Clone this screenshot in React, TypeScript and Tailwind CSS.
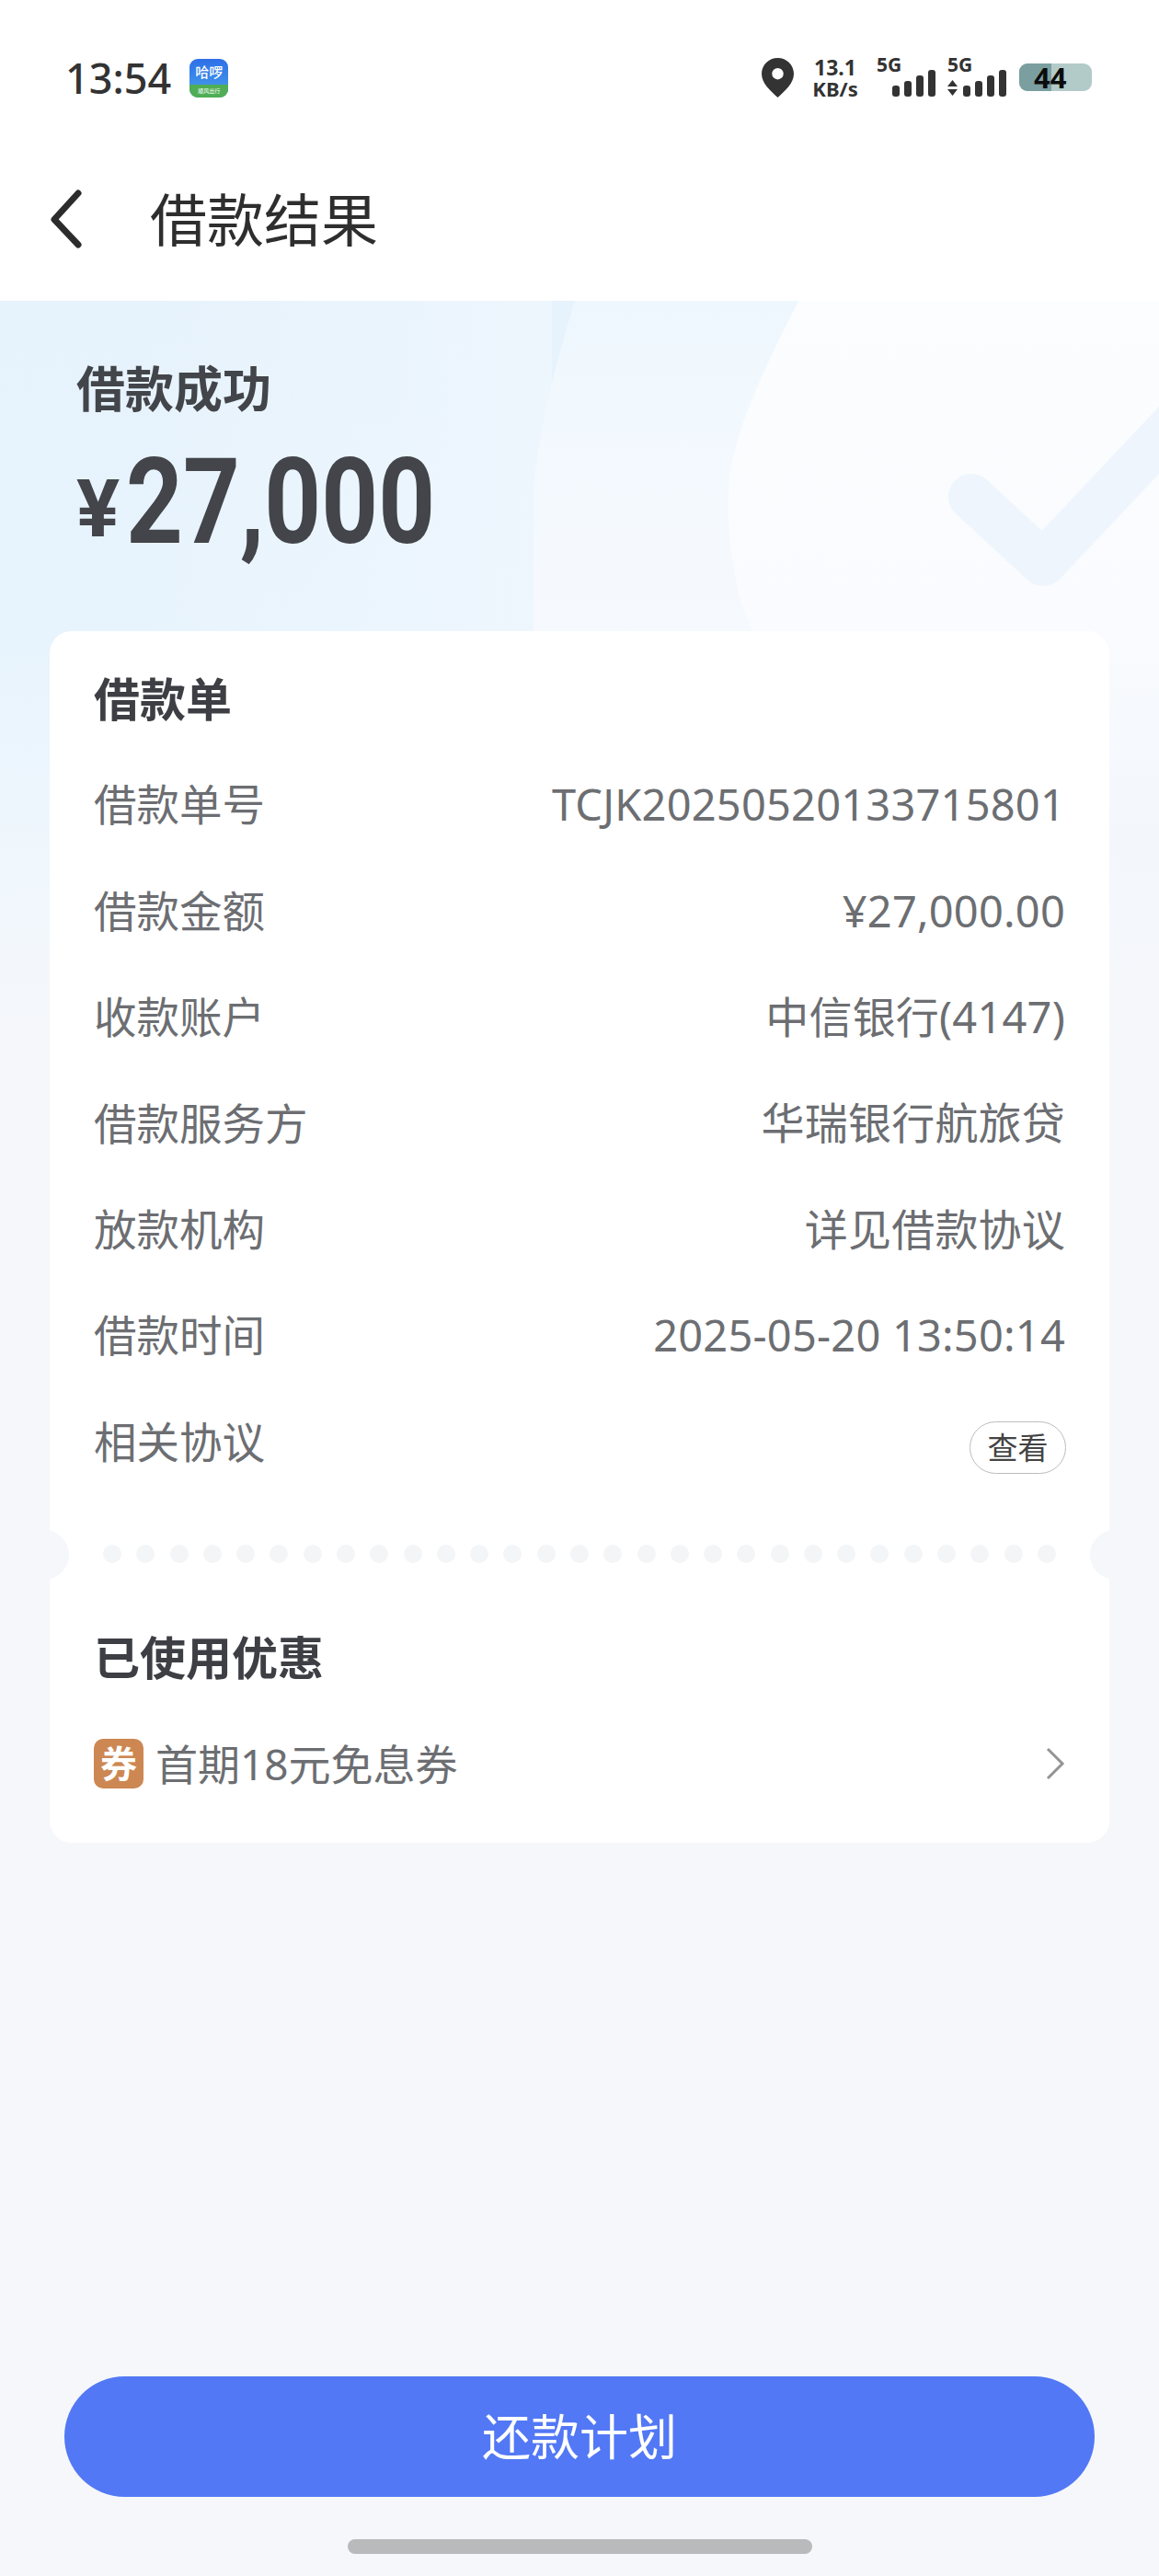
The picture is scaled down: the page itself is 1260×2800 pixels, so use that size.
const sans = "font-['Noto_Sans','Noto_Sans_CJK_SC',sans-serif]";

const rows = [
  { label: "借款单号", value: "TCJK20250520133715801" },
  { label: "借款金额", value: "¥27,000.00" },
  { label: "收款账户", value: "中信银行(4147)" },
  { label: "借款服务方", value: "华瑞银行航旅贷" },
  { label: "放款机构", value: "详见借款协议" },
  { label: "借款时间", value: "2025-05-20 13:50:14" },
];

function SignalBars() {
  return (
    <svg width="47" height="29" viewBox="0 0 47 29" fill="#333333">
      <rect x="0" y="17" width="8" height="12" rx="3" />
      <rect x="13" y="12" width="8" height="17" rx="3" />
      <rect x="26" y="6" width="8" height="23" rx="3" />
      <rect x="39" y="0" width="8" height="29" rx="3" />
    </svg>
  );
}

function StatusBar() {
  return (
    <div className="flex h-[150px] items-start justify-between pl-[71px] pr-[73px] pt-[62px]">
      <div className="flex items-center">
        <span className="text-[45px] leading-[46px] font-medium text-[#333333]">13:54</span>
        <div className="ml-[20px] h-[42px] w-[42px] overflow-hidden rounded-[9px] bg-gradient-to-b from-[#2e6fe8] to-[#4aa0ea]">
          <div className="flex h-[28px] items-center justify-center text-[15px] leading-none font-medium text-white">哈啰</div>
          <div className="flex h-[14px] items-center justify-center bg-[#4fae55] text-[6px] leading-none whitespace-nowrap text-white">顺风出行</div>
        </div>
      </div>
      <div className="flex items-start">
        <svg width="35" height="43" viewBox="0 0 35 43" className="mt-px">
          <path fillRule="evenodd" fill="#333333" d="M17.5 0C7.8 0 0 7.7 0 17.2 0 27.5 9.5 35.500 17.5 43 25.5 35.500 35 27.5 35 17.2 35 7.7 27.2 0 17.5 0ZM17.5 11a6.2 6.2 0 1 1 0 12.4 6.2 6.2 0 0 1 0-12.4Z" />
        </svg>
        <div className="ml-[19px] flex w-[52px] flex-col items-center text-[#333333]">
          <span className="text-[23px] leading-[23px] font-bold">13.1</span>
          <span className="text-[22px] leading-[22px] font-bold">KB/s</span>
        </div>
        <div className="ml-[19px] flex w-[64px] flex-col items-start">
          <span className="text-[21px] leading-[17px] font-bold text-[#333333]">5G</span>
          <div className="-mt-[3px] ml-[17px]">
            <SignalBars />
          </div>
        </div>
        <div className="ml-[13px] flex w-[64px] flex-col items-start">
          <span className="text-[21px] leading-[17px] font-bold text-[#333333]">5G</span>
          <div className="-mt-[3px] flex items-end">
            <svg width="11" height="17" viewBox="0 0 11 17" fill="#333333" className="mr-[6px] mb-px">
              <path d="M5.5 0 11 7H0ZM0 10h11l-5.5 7Z" />
            </svg>
            <SignalBars />
          </div>
        </div>
        <div className="relative mt-[7px] ml-[14px] flex h-[30px] w-[79px] rounded-[9px] bg-[#b2cbc8]">
          <div className="h-full w-[35px] rounded-l-[9px] bg-[#7b9fa0]" />
          <span className="absolute -top-px left-[16px] text-[31px] leading-[32px] font-bold text-[#0c0c0c]">44</span>
        </div>
      </div>
    </div>
  );
}

function HeroBackground() {
  // Decorative wash behind the amount; fades into the page colour under the card
  return (
    <svg className="absolute top-0 left-0" width="1260" height="830" viewBox="0 0 1260 830">
      <defs>
        <linearGradient id="wash" x1="0" y1="0" x2="0" y2="1">
          <stop offset="0" stopColor="#e6f2fc" />
          <stop offset="0.45" stopColor="#e8f4fd" />
          <stop offset="0.75" stopColor="#f0f7fd" />
          <stop offset="1" stopColor="#f6f7fa" />
        </linearGradient>
        <linearGradient id="soften" gradientUnits="userSpaceOnUse" x1="150" y1="0" x2="600" y2="0">
          <stop offset="0" stopColor="#f2f8fe" stopOpacity="0" />
          <stop offset="1" stopColor="#f2f8fe" stopOpacity="0.65" />
        </linearGradient>
        <linearGradient id="mid" x1="0" y1="0" x2="0" y2="1">
          <stop offset="0" stopColor="#eef7fe" />
          <stop offset="0.2" stopColor="#f3f9fe" />
          <stop offset="0.45" stopColor="#f6f9fe" />
          <stop offset="1" stopColor="#f6f7fa" />
        </linearGradient>
        <linearGradient id="light" x1="0" y1="0" x2="0" y2="1">
          <stop offset="0" stopColor="#fbfdff" />
          <stop offset="0.44" stopColor="#f9fbfe" />
          <stop offset="0.7" stopColor="#f3f7fc" />
          <stop offset="1" stopColor="#f6f7fa" />
        </linearGradient>
      </defs>
      <rect width="1260" height="830" fill="url(#wash)" />
      <rect width="600" height="400" fill="url(#soften)" />
      <path d="M625 0C600 80 585 150 580 200V830H1260V0Z" fill="url(#mid)" />
      <path d="M868 0C825 85 795 150 792 205 790 270 800 320 820 365L1000 830H1260V0Z" fill="url(#light)" />
      <path d="M1056 213 1134 285 1285 125" fill="none" stroke="#eef5fd" strokeWidth="50" strokeLinecap="round" strokeLinejoin="round" />
    </svg>
  );
}

function NavBar() {
  return (
    <div className="flex h-[177px] items-center bg-white">
      <svg width="40" height="64" viewBox="0 0 40 64" className="mt-[-2px] ml-[50px]">
        <path d="M35 4 9 32.500 35 60" fill="none" stroke="#2c2c2c" strokeWidth="7" strokeLinecap="round" strokeLinejoin="round" />
      </svg>
      <h1 className="ml-[73px] text-[62px] leading-none font-normal text-[#2e2e2e]">借款结果</h1>
    </div>
  );
}

function Row({ label, value }: { label: string; value: string }) {
  return (
    <div className="flex h-[115.4px] items-center justify-between">
      <span className="text-[46.500px] leading-none text-[#6c6e72]">{label}</span>
      <span className="text-[47px] leading-none tracking-[0.2px] text-[#6c6e72]">{value}</span>
    </div>
  );
}

function TicketDivider() {
  return (
    <div className="relative h-[129px]">
      <div className="absolute top-[38px] -left-[33px] h-[54px] w-[54px] rounded-full bg-[#f5f7fa]" />
      <div className="absolute top-[38px] -right-[33px] h-[54px] w-[54px] rounded-full bg-[#f5f7fa]" />
      <div className="flex h-full items-center justify-between px-[58px]">
        {Array.from({ length: 29 }).map((_, i) => (
          <div key={i} className="h-[20px] w-[20px] rounded-full bg-[#f3f5f7]" />
        ))}
      </div>
    </div>
  );
}

export default function App() {
  return (
    <div className={`${sans} flex h-[2800px] w-[1260px] flex-col overflow-hidden bg-[#f6f7fa]`}>
      <div className="bg-white">
        <StatusBar />
        <NavBar />
      </div>

      <div className="relative flex flex-1 flex-col">
        <HeroBackground />

        <div className="relative px-[83px] pt-[58px]">
          <div className="text-[53px] leading-[76px] font-bold text-[#42454a]">借款成功</div>
          <div className="mt-[10px] flex h-[150px] items-center font-['Roboto',sans-serif] font-bold text-[#43454a]">
            <span className="mt-[14px] text-[88px] leading-none">¥</span>
            <span className="ml-[7px] origin-left scale-x-[0.83] text-[130px] leading-none">27,000</span>
          </div>
        </div>

        <div className="relative mx-[54px] mt-[65px] rounded-[24px] bg-white">
          <div className="px-[48px] pt-[47px]">
            <div className="h-[84px] text-[50px] leading-[54px] font-bold text-[#3d3f44]">借款单</div>
            {rows.map((row) => (
              <Row key={row.label} label={row.label} value={row.value} />
            ))}
            <div className="flex h-[115.4px] items-center justify-between">
              <span className="text-[46.500px] leading-none text-[#6c6e72]">相关协议</span>
              <span className="mt-[12px] -mr-[1px] flex h-[57px] w-[105px] items-center justify-center rounded-full border border-[#bdbdbd] text-[33px] leading-none text-[#444444]">查看</span>
            </div>
          </div>
          <TicketDivider />
          <div className="px-[48px] pb-[59px]">
            <div className="pt-[21px] text-[50px] leading-[54px] font-bold text-[#3d3f44]">已使用优惠</div>
            <div className="mt-[61px] flex h-[54px] items-center">
              <span className="flex h-[54px] w-[54px] items-center justify-center rounded-[10px] bg-[#cd8752] text-[40px] leading-none font-bold text-white">券</span>
              <span className="ml-[13px] text-[46px] leading-none text-[#6c6e72]">首期18元免息券</span>
              <svg width="22" height="36" viewBox="0 0 22 36" className="mt-[1px] ml-auto">
                <path d="M3 2 19 18 3 34" fill="none" stroke="#949494" strokeWidth="3" />
              </svg>
            </div>
          </div>
        </div>

        <div className="relative mt-auto flex flex-col items-center">
          <button className="flex h-[131px] w-[1120px] items-center justify-center rounded-full bg-[#5278f5] text-[53px] leading-none text-white">
            还款计划
          </button>
          <div className="mt-[46px] mb-[24px] h-[16px] w-[505px] rounded-full bg-[#b9babc]" />
        </div>
      </div>
    </div>
  );
}
